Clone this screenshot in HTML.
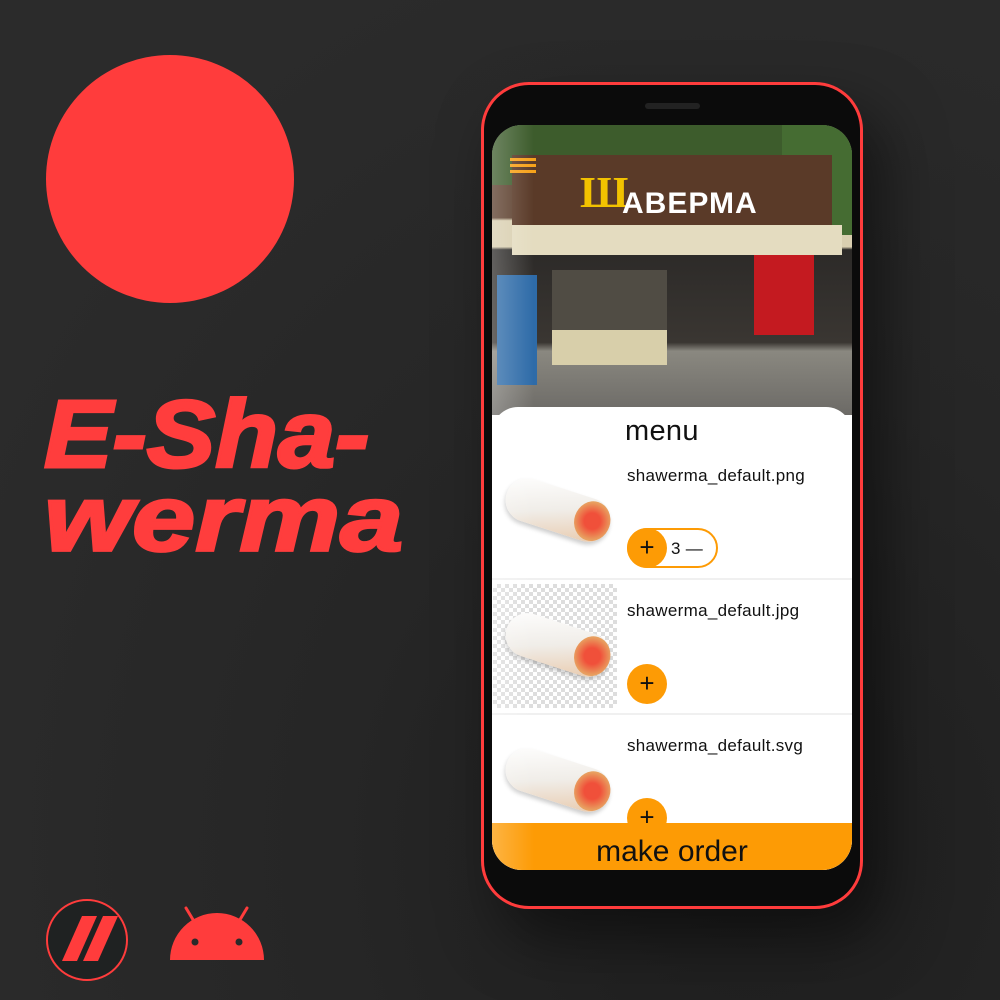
<!DOCTYPE html>
<html><head><meta charset="utf-8"><style>
*{margin:0;padding:0;box-sizing:border-box}
body{width:1000px;height:1000px;overflow:hidden;background:radial-gradient(ellipse at 75% 85%,#1e1e1e 0%,#262626 40%,#2b2b2b 80%);font-family:"Liberation Sans",sans-serif;position:relative}
.abs{position:absolute}
.t{color:#ff3d3d;font-weight:bold;font-style:italic;white-space:nowrap;transform-origin:left top;-webkit-text-stroke:3px #ff3d3d}
.phone{left:481px;top:82px;width:382px;height:827px;border-radius:48px;background:#ff3c3c;box-shadow:20px 30px 60px rgba(0,0,0,.5)}
.inner{left:484px;top:85px;width:376px;height:821px;border-radius:45px;background:#0b0b0b}
.screen{left:492px;top:125px;width:360px;height:745px;border-radius:30px;overflow:hidden;background:#fff}
.txt{font-family:"Liberation Sans",sans-serif;color:#111;font-size:17px;letter-spacing:.3px}
.btn{width:40px;height:40px;border-radius:50%;background:#fd9b05;color:#111;font-size:26px;line-height:38px;text-align:center}
.div{height:2px;background:#f0f0f0;left:0;width:360px}
.wrap{width:108px;height:44px;border-radius:22px;background:linear-gradient(160deg,#fff 0%,#f0ede8 50%,#e8c7a8 100%);transform:rotate(18deg);box-shadow:0 3px 4px rgba(0,0,0,.2)}
.wrap:after{content:"";position:absolute;right:0;top:2px;width:36px;height:40px;border-radius:50%;background:radial-gradient(circle,#f0503a 30%,#e8a060 70%)}
</style></head><body>
<div class="abs" style="left:46px;top:55px;width:248px;height:248px;border-radius:50%;background:#ff3c3c"></div>
<div class="abs t" style="left:44px;top:380px;font-size:96px;transform:scaleX(1.07)">E-Sha-</div>
<div class="abs t" style="left:44px;top:466px;font-size:104px;transform:scaleX(1.09) scaleY(0.9)">werma</div>
<div class="abs" style="left:46px;top:899px;width:82px;height:82px;border-radius:50%;border:2px solid #ff3c3c;background:#1f2222"></div>
<svg class="abs" style="left:46px;top:899px" width="82" height="82"><polygon points="36,17 51,17 31,62 16,62" fill="#ff3c3c"/><polygon points="57,17 72,17 52,62 37,62" fill="#ff3c3c"/></svg>
<svg class="abs" style="left:170px;top:905px" width="96" height="58"><line x1="16" y1="3" x2="25" y2="18" stroke="#ff3c3c" stroke-width="3" stroke-linecap="round"/><line x1="77" y1="3" x2="68" y2="18" stroke="#ff3c3c" stroke-width="3" stroke-linecap="round"/><path d="M0,55 A47,47 0 0 1 94,55 Z" fill="#ff3c3c"/><circle cx="25" cy="37" r="3.5" fill="#2a2a2a"/><circle cx="69" cy="37" r="3.5" fill="#2a2a2a"/></svg>
<div class="abs phone"></div>
<div class="abs inner"></div>
<div class="abs" style="left:645px;top:103px;width:55px;height:6px;border-radius:3px;background:#222"></div>
<div class="abs screen">
 <div class="abs" style="left:0;top:0;width:360px;height:290px;background:linear-gradient(#3f5a2e 0%,#4c6b36 12%,#5b3e2c 14%,#5b3e2c 32%,#d9cfb0 33%,#d9cfb0 42%,#2c2a28 43%,#3a3632 75%,#8a8880 78%,#6c6a66 100%)"></div>
 <div class="abs" style="left:0;top:0;width:360px;height:60px;background:#3d5c2c"></div>
 <div class="abs" style="left:290px;top:0;width:70px;height:110px;background:#456c32"></div>
 <div class="abs" style="left:20px;top:30px;width:320px;height:70px;background:#5a3a28"></div>
 <div class="abs" style="left:88px;top:42px;font-size:44px;color:#f2c200;font-weight:bold;font-family:'Liberation Serif',serif">Ш</div>
 <div class="abs" style="left:130px;top:62px;font-size:30px;color:#fff;font-weight:bold;letter-spacing:1px">АВЕРМА</div>
 <div class="abs" style="left:20px;top:100px;width:330px;height:30px;background:#e4dcc0"></div>
 <div class="abs" style="left:262px;top:130px;width:60px;height:80px;background:#c41a20"></div>
 <div class="abs" style="left:5px;top:150px;width:40px;height:110px;background:#2e6ba8"></div>
 <div class="abs" style="left:60px;top:145px;width:115px;height:70px;background:#504c44"></div>
 <div class="abs" style="left:60px;top:205px;width:115px;height:35px;background:#d8cfaa"></div>
 <div class="abs" style="left:18px;top:33px;width:26px;height:3px;background:#f7a21a;box-shadow:0 6px 0 #f7a21a,0 12px 0 #f7a21a"></div>
 <div class="abs" style="left:0;top:282px;width:360px;height:470px;background:#fff;border-radius:26px 26px 0 0"></div>
 <div class="abs txt" style="left:133px;top:290px;font-size:29px">menu</div>
 <div class="abs wrap" style="left:12px;top:363px"></div>
 <div class="abs txt" style="left:135px;top:341px">shawerma_default.png</div>
 <div class="abs" style="left:135px;top:403px;width:91px;height:40px;border-radius:20px;border:2px solid #fd9b05"></div>
 <div class="abs btn" style="left:135px;top:403px">+</div>
 <div class="abs txt" style="left:179px;top:414px;font-size:17px">3 —</div>
 <div class="abs div" style="top:453px"></div>
 <div class="abs" style="left:1px;top:459px;width:124px;height:124px;background-color:#fff;background-image:linear-gradient(45deg,#ddd 25%,transparent 25%,transparent 75%,#ddd 75%),linear-gradient(45deg,#ddd 25%,transparent 25%,transparent 75%,#ddd 75%);background-size:8px 8px;background-position:0 0,4px 4px"></div>
 <div class="abs wrap" style="left:12px;top:498px"></div>
 <div class="abs txt" style="left:135px;top:476px">shawerma_default.jpg</div>
 <div class="abs btn" style="left:135px;top:539px">+</div>
 <div class="abs div" style="top:588px"></div>
 <div class="abs wrap" style="left:12px;top:633px"></div>
 <div class="abs txt" style="left:135px;top:611px">shawerma_default.svg</div>
 <div class="abs btn" style="left:135px;top:673px">+</div>
 <div class="abs" style="left:0;top:698px;width:360px;height:47px;background:#fd9b05;text-align:center;font-size:30px;color:#111;line-height:58px">make order</div>
 <div class="abs" style="left:0;top:0;width:42px;height:745px;background:linear-gradient(90deg,rgba(255,255,255,.25),rgba(255,255,255,0))"></div>
</div>
</body></html>
